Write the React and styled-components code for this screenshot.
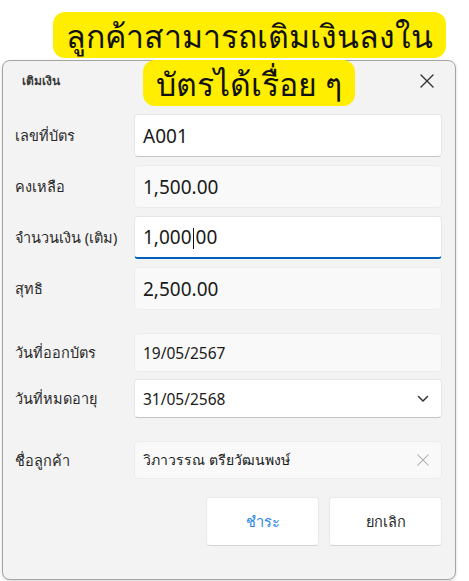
import React from 'react';
import styled, { createGlobalStyle } from 'styled-components';

const GlobalStyle = createGlobalStyle`
  html, body {
    margin: 0;
    padding: 0;
    background: #ffffff;
  }
  body {
    font-family: "Noto Sans", "Open Sans", sans-serif;
    color: #1b1b1b;
  }
`;

const Page = styled.div`
  position: relative;
  width: 469px;
  height: 581px;
  padding-top: 60px;
  padding-left: 2px;
  box-sizing: border-box;
`;

const Banner = styled.div`
  position: absolute;
  top: 12px;
  left: 40px;
  width: 418px;
  text-align: center;
  font-size: 32px;
  line-height: 48px;
  color: #111;
  z-index: 2;
`;

const Highlight = styled.span`
  background: #ffee00;
  padding: 2px 13px 1px;
  border-radius: 12px;
  box-decoration-break: clone;
  -webkit-box-decoration-break: clone;
`;

const Dialog = styled.div`
  width: 454px;
  height: 520px;
  box-sizing: border-box;
  background: #f3f3f3;
  border: 1px solid #a5a5a5;
  border-radius: 8px;
  box-shadow: 0 1px 3px rgba(0, 0, 0, 0.18);
  display: flex;
  flex-direction: column;
`;

const Header = styled.div`
  height: 39px;
  display: flex;
  align-items: center;
  justify-content: space-between;
  padding: 0 20px 0 19px;
`;

const Title = styled.div`
  font-size: 12px;
  font-weight: 600;
  color: #3a3a3a;
`;

const CloseButton = styled.div`
  width: 16px;
  height: 16px;
  display: flex;
  align-items: center;
  justify-content: center;
  color: #333;
`;

const Form = styled.div`
  padding: 14px 13px 0 11px;
  display: flex;
  flex-direction: column;
`;

const Group = styled.div`
  display: flex;
  flex-direction: column;
  gap: ${({ gap }) => gap}px;
  margin-bottom: ${({ after }) => after || 0}px;
`;

const Row = styled.div`
  display: grid;
  grid-template-columns: 120px 1fr;
  align-items: center;
`;

const Label = styled.div`
  font-size: 14.5px;
  color: #2a2a2a;
  padding-left: 1px;
`;

const Field = styled.div`
  position: relative;
  height: ${({ h }) => h}px;
  box-sizing: border-box;
  display: flex;
  align-items: center;
  padding: 0 12px 0 8px;
  font-size: ${({ size }) => size}px;
  color: #1a1a1a;
  border-radius: 4px;
  border: 1px solid ${({ readOnly }) => (readOnly ? '#ececec' : '#e6e6e6')};
  border-bottom-color: ${({ readOnly, focused }) =>
    focused ? '#005fb8' : readOnly ? '#ececec' : '#c4c4c4'};
  border-bottom-width: ${({ focused }) => (focused ? 2 : 1)}px;
  background: ${({ readOnly }) => (readOnly ? '#f9f9f9' : '#ffffff')};
`;

const FieldText = styled.span`
  flex: 1;
  white-space: nowrap;
`;

const Caret = styled.span`
  display: inline-block;
  width: 1px;
  height: 21px;
  background: #111;
  vertical-align: middle;
  margin: 0 2px 0 1px;
`;

const TrailingIcon = styled.span`
  display: flex;
  align-items: center;
  color: ${({ muted }) => (muted ? '#b0b0b0' : '#333')};
`;

const Actions = styled.div`
  display: flex;
  justify-content: flex-end;
  gap: 10px;
  margin-top: 18px;
`;

const Button = styled.div`
  width: 113px;
  height: 49px;
  box-sizing: border-box;
  display: flex;
  align-items: center;
  justify-content: center;
  background: #ffffff;
  border: 1px solid #e8e8e8;
  border-bottom-color: #d4d4d4;
  border-radius: 4px;
  font-size: 14.5px;
  color: ${({ primary }) => (primary ? '#2a86e8' : '#2a2a2a')};
`;

const XIcon = ({ size = 14, stroke = 1.3 }) => (
  <svg width={size} height={size} viewBox="0 0 14 14" fill="none">
    <path d="M1 1L13 13M13 1L1 13" stroke="currentColor" strokeWidth={stroke} strokeLinecap="round" />
  </svg>
);

const Chevron = () => (
  <svg width="12" height="8" viewBox="0 0 12 8" fill="none">
    <path d="M1.5 1.5L6 6L10.5 1.5" stroke="currentColor" strokeWidth="1.5" strokeLinecap="round" strokeLinejoin="round" />
  </svg>
);

const App = () => {
  return (
    <Page>
      <GlobalStyle />
      <Banner>
        <Highlight>
          ลูกค้าสามารถเติมเงินลงใน
          <br />
          บัตรได้เรื่อย ๆ
        </Highlight>
      </Banner>

      <Dialog>
        <Header>
          <Title>เติมเงิน</Title>
          <CloseButton>
            <XIcon size={14} stroke={1.4} />
          </CloseButton>
        </Header>

        <Form>
          <Group gap={8} after={23}>
            <Row>
              <Label>เลขที่บัตร</Label>
              <Field h={43} size={19}>
                <FieldText>A001</FieldText>
              </Field>
            </Row>
            <Row>
              <Label>คงเหลือ</Label>
              <Field h={43} size={19} readOnly>
                <FieldText>1,500.00</FieldText>
              </Field>
            </Row>
            <Row>
              <Label>จำนวนเงิน (เติม)</Label>
              <Field h={43} size={19} focused>
                <FieldText>
                  1,000
                  <Caret />
                  00
                </FieldText>
              </Field>
            </Row>
            <Row>
              <Label>สุทธิ</Label>
              <Field h={43} size={19} readOnly>
                <FieldText>2,500.00</FieldText>
              </Field>
            </Row>
          </Group>

          <Group gap={7} after={23}>
            <Row>
              <Label>วันที่ออกบัตร</Label>
              <Field h={39} size={15.5} readOnly>
                <FieldText>19/05/2567</FieldText>
              </Field>
            </Row>
            <Row>
              <Label>วันที่หมดอายุ</Label>
              <Field h={39} size={15.5}>
                <FieldText>31/05/2568</FieldText>
                <TrailingIcon>
                  <Chevron />
                </TrailingIcon>
              </Field>
            </Row>
          </Group>

          <Group gap={0}>
            <Row>
              <Label>ชื่อลูกค้า</Label>
              <Field h={38} size={14} readOnly>
                <FieldText>วิภาวรรณ ตรียวัฒนพงษ์</FieldText>
                <TrailingIcon muted>
                  <XIcon size={12} stroke={1.2} />
                </TrailingIcon>
              </Field>
            </Row>
          </Group>

          <Actions>
            <Button primary>ชำระ</Button>
            <Button>ยกเลิก</Button>
          </Actions>
        </Form>
      </Dialog>
    </Page>
  );
};

export default App;
